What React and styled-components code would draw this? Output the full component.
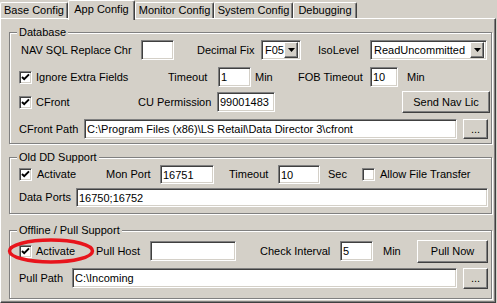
import React from 'react';
import styled, { createGlobalStyle } from 'styled-components';

const Global = createGlobalStyle`
  html, body { margin: 0; padding: 0; background: #d4d0c8; }
  body { font-family: "Liberation Sans", Arial, sans-serif; font-size: 11px; color: #000; }
  * { box-sizing: border-box; }
`;

const Window = styled.div`
  width: 497px;
  height: 303px;
  background: #d4d0c8;
  overflow: hidden;
`;

const TabStrip = styled.div`
  display: flex;
  align-items: flex-end;
  height: 18px;
  position: relative;
  z-index: 1;
`;

const Tab = styled.div`
  flex: none;
  width: ${p => p.$w}px;
  height: ${p => (p.$active ? 20 : 16)}px;
  margin-bottom: ${p => (p.$active ? -2 : 0)}px;
  padding-top: ${p => (p.$active ? 2 : 1)}px;
  background: #d4d0c8;
  border-top: 1px solid #fff;
  border-left: 1px solid #fff;
  border-right: 1px solid #404040;
  box-shadow: inset -1px 0 0 #808080;
  border-radius: 2px 2px 0 0;
  text-align: center;
  line-height: 13px;
  white-space: nowrap;
`;

const Panel = styled.div`
  height: 285px;
  padding: 7px 0 0 8px;
  border-top: 1px solid #fff;
  border-left: 1px solid #fff;
  border-right: 1px solid #404040;
  border-bottom: 1px solid #404040;
  box-shadow: inset -1px -1px 0 #808080;
  width: 496px;
`;

const Group = styled.fieldset`
  margin: ${p => p.$mt}px 0 0 0;
  padding: 0 0 ${p => p.$pb}px 0;
  width: 483px;
  min-width: 0;
  border: 1px solid #808080;
  box-shadow: inset 1px 1px 0 #fff, 1px 1px 0 #fff;
`;

const Legend = styled.legend`
  margin-left: 7px;
  padding: 0 2px;
  height: 13px;
  line-height: 13px;
  background: #d4d0c8;
`;

const Row = styled.div`
  display: flex;
  align-items: center;
  height: ${p => p.$h}px;
  margin-top: ${p => p.$mt}px;
  position: relative;
`;

const Label = styled.span`
  flex: none;
  width: ${p => (p.$w ? `${p.$w}px` : 'auto')};
  margin-left: ${p => p.$ml || 0}px;
  line-height: 13px;
  white-space: nowrap;
`;

const Edit = styled.input`
  flex: none;
  width: ${p => p.$w}px;
  height: 100%;
  margin: 0;
  padding: 0 0 0 2px;
  font: inherit;
  color: #000;
  background: #fff;
  border: 1px solid;
  border-color: #808080 #fff #fff #808080;
  box-shadow: inset 1px 1px 0 #404040, inset -1px -1px 0 #d4d0c8;
  outline: none;
`;

const Combo = styled.div`
  flex: none;
  display: flex;
  align-items: center;
  width: ${p => p.$w}px;
  height: 20px;
  padding: 2px;
  background: #fff;
  border: 1px solid;
  border-color: #808080 #fff #fff #808080;
  box-shadow: inset 1px 1px 0 #404040, inset -1px -1px 0 #d4d0c8;
`;

const ComboText = styled.span`
  flex: 1;
  min-width: 0;
  padding-left: 1px;
  white-space: nowrap;
  overflow: hidden;
  line-height: 13px;
`;

const ComboButton = styled.span`
  flex: none;
  width: 14px;
  height: 16px;
  display: flex;
  align-items: center;
  justify-content: center;
  background: #d4d0c8;
  border: 1px solid;
  border-color: #fff #404040 #404040 #fff;
  box-shadow: inset -1px -1px 0 #808080;
`;

const Check = styled.span`
  flex: none;
  width: 13px;
  height: 13px;
  margin-left: ${p => p.$ml || 0}px;
  display: flex;
  align-items: center;
  justify-content: center;
  background: #fff;
  border: 1px solid;
  border-color: #808080 #fff #fff #808080;
  box-shadow: inset 1px 1px 0 #404040, inset -1px -1px 0 #d4d0c8;
`;

const Button = styled.button`
  flex: none;
  width: ${p => p.$w}px;
  height: ${p => p.$h}px;
  margin: 0 0 0 ${p => p.$ml || 0}px;
  padding: 0;
  font: inherit;
  color: #000;
  background: #d4d0c8;
  border: 1px solid;
  border-color: #fff #404040 #404040 #fff;
  box-shadow: inset -1px -1px 0 #808080;
  text-align: center;
  line-height: 13px;
`;

const Highlight = styled.svg`
  position: absolute;
  left: -3px;
  top: -3px;
  pointer-events: none;
`;

const Arrow = () => (
  <svg width="7" height="4" viewBox="0 0 7 4">
    <path d="M0 0h7L3.5 4z" fill="#000" />
  </svg>
);

const Tick = () => (
  <svg width="9" height="9" viewBox="0 0 9 9">
    <path d="M1 4l2.2 2.2L8 1.4" fill="none" stroke="#000" strokeWidth="2" />
  </svg>
);

const Box = ({ checked, ml }) => <Check $ml={ml}>{checked && <Tick />}</Check>;

export default function App() {
  return (
    <Window>
      <Global />
      <TabStrip>
        <Tab $w={68}>Base Config</Tab>
        <Tab $w={67} $active>App Config</Tab>
        <Tab $w={79}>Monitor Config</Tab>
        <Tab $w={79}>System Config</Tab>
        <Tab $w={64}>Debugging</Tab>
      </TabStrip>
      <Panel>
        <Group $mt={0} $pb={4}>
          <Legend>Database</Legend>
          <Row $h={20} $mt={1}>
            <Label $ml={11} $w={120}>NAV SQL Replace Chr</Label>
            <Edit $w={33} defaultValue="" readOnly />
            <Label $ml={23} $w={64}>Decimal Fix</Label>
            <Combo $w={40}>
              <ComboText>F05</ComboText>
              <ComboButton><Arrow /></ComboButton>
            </Combo>
            <Label $ml={17} $w={52}>IsoLevel</Label>
            <Combo $w={117}>
              <ComboText>ReadUncommitted</ComboText>
              <ComboButton><Arrow /></ComboButton>
            </Combo>
          </Row>
          <Row $h={20} $mt={7}>
            <Box checked ml={9} />
            <Label $ml={4} $w={132}>Ignore Extra Fields</Label>
            <Label $w={50}>Timeout</Label>
            <Edit $w={33} defaultValue="1" readOnly />
            <Label $ml={4} $w={43}>Min</Label>
            <Label $w={72}>FOB Timeout</Label>
            <Edit $w={28} defaultValue="10" readOnly />
            <Label $ml={9}>Min</Label>
          </Row>
          <Row $h={20} $mt={5}>
            <Box checked ml={9} />
            <Label $ml={4} $w={102}>CFront</Label>
            <Label $w={79}>CU Permission</Label>
            <Edit $w={58} defaultValue="99001483" readOnly />
            <Button $ml={127} $w={88} $h={22}>Send Nav Lic</Button>
          </Row>
          <Row $h={20} $mt={7}>
            <Label $ml={9} $w={65}>CFront Path</Label>
            <Edit $w={373} defaultValue="C:\Program Files (x86)\LS Retail\Data Director 3\cfront" readOnly />
            <Button $ml={6} $w={25} $h={20}>...</Button>
          </Row>
        </Group>

        <Group $mt={7} $pb={6}>
          <Legend>Old DD Support</Legend>
          <Row $h={19} $mt={1}>
            <Box checked ml={9} />
            <Label $ml={5} $w={69}>Activate</Label>
            <Label $w={54}>Mon Port</Label>
            <Edit $w={54} defaultValue="16751" readOnly />
            <Label $ml={15} $w={49}>Timeout</Label>
            <Edit $w={42} defaultValue="10" readOnly />
            <Label $ml={8} $w={34}>Sec</Label>
            <Box />
            <Label $ml={5}>Allow File Transfer</Label>
          </Row>
          <Row $h={19} $mt={4}>
            <Label $ml={9} $w={57}>Data Ports</Label>
            <Edit $w={412} defaultValue="16750;16752" readOnly />
          </Row>
        </Group>

        <Group $mt={10} $pb={10}>
          <Legend>Offline / Pull Support</Legend>
          <Row $h={20} $mt={4}>
            <Box checked ml={9} />
            <Label $ml={4} $w={60}>Activate</Label>
            <Label $w={54}>Pull Host</Label>
            <Edit $w={86} defaultValue="" readOnly />
            <Label $ml={24} $w={80}>Check Interval</Label>
            <Edit $w={33} defaultValue="5" readOnly />
            <Label $ml={10} $w={34}>Min</Label>
            <Button $w={71} $h={23}>Pull Now</Button>
            <Highlight width="88" height="26" viewBox="0 0 88 26">
              <ellipse cx="44" cy="13" rx="41.5" ry="11" fill="none" stroke="#e8141c" strokeWidth="3.5" />
            </Highlight>
          </Row>
          <Row $h={20} $mt={7}>
            <Label $ml={9} $w={53}>Pull Path</Label>
            <Edit $w={385} defaultValue="C:\Incoming" readOnly />
            <Button $ml={6} $w={25} $h={21}>...</Button>
          </Row>
        </Group>
      </Panel>
    </Window>
  );
}
